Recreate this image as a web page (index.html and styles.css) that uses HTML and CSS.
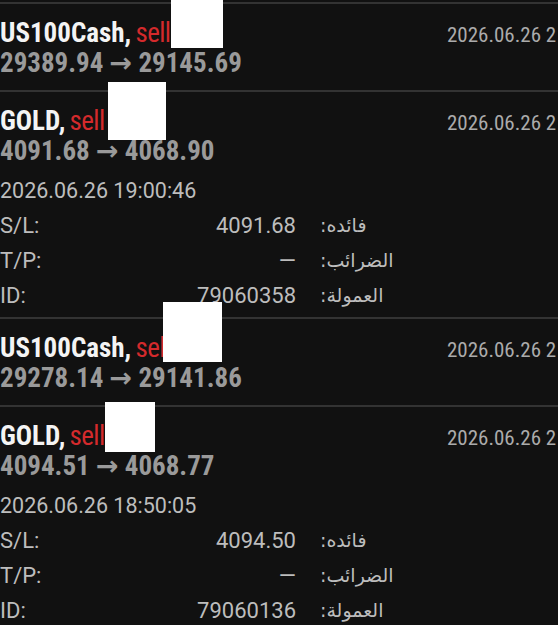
FILE: index.html
```html
<!DOCTYPE html>
<html lang="ar">
<head>
<meta charset="utf-8">
<title>History</title>
<link rel="stylesheet" href="styles.css">
</head>
<body>
<div class="page" dir="ltr">
  <div class="list">
    <div class="trade">
      <div class="head">
        <div class="main">
          <div class="title"><span class="sym">US100Cash,</span> <span class="side">sell</span></div>
          <div class="price">29389.94 → 29145.69</div>
        </div>
        <div class="time">2026.06.26 2</div>
      </div>
    </div>
    <div class="trade">
      <div class="head">
        <div class="main">
          <div class="title"><span class="sym">GOLD,</span> <span class="side">sell</span></div>
          <div class="price">4091.68 → 4068.90</div>
        </div>
        <div class="time">2026.06.26 2</div>
      </div>
      <div class="details">
        <div class="opened">2026.06.26 19:00:46</div>
        <div class="row"><span class="k">S/L:</span><span class="v">4091.68</span><span class="k2" dir="rtl">فائده:</span></div>
        <div class="row"><span class="k">T/P:</span><span class="v">—</span><span class="k2" dir="rtl">الضرائب:</span></div>
        <div class="row"><span class="k">ID:</span><span class="v">79060358</span><span class="k2" dir="rtl">العمولة:</span></div>
      </div>
    </div>
    <div class="trade">
      <div class="head">
        <div class="main">
          <div class="title"><span class="sym">US100Cash,</span> <span class="side">sell</span></div>
          <div class="price">29278.14 → 29141.86</div>
        </div>
        <div class="time">2026.06.26 2</div>
      </div>
    </div>
    <div class="trade">
      <div class="head">
        <div class="main">
          <div class="title"><span class="sym">GOLD,</span> <span class="side">sell</span></div>
          <div class="price">4094.51 → 4068.77</div>
        </div>
        <div class="time">2026.06.26 2</div>
      </div>
      <div class="details">
        <div class="opened">2026.06.26 18:50:05</div>
        <div class="row"><span class="k">S/L:</span><span class="v">4094.50</span><span class="k2" dir="rtl">فائده:</span></div>
        <div class="row"><span class="k">T/P:</span><span class="v">—</span><span class="k2" dir="rtl">الضرائب:</span></div>
        <div class="row"><span class="k">ID:</span><span class="v">79060136</span><span class="k2" dir="rtl">العمولة:</span></div>
      </div>
    </div>
  </div>
  <div class="redact r1"></div>
  <div class="redact r2"></div>
  <div class="redact r3"></div>
  <div class="redact r4"></div>
</div>
</body>
</html>
```

FILE: styles.css
```css
html, body {
  margin: 0;
  padding: 0;
  background: #111111;
}
body {
  width: 558px;
  height: 625px;
  overflow: hidden;
  font-family: "Roboto Condensed", Roboto, "DejaVu Sans", sans-serif;
}
.page {
  position: relative;
  width: 558px;
  height: 625px;
  overflow: hidden;
}
.list {
  padding-top: 2px;
}
.trade {
  border-top: 2px solid #333333;
  padding: 14px 0 12px;
}
.trade:has(.details) {
  padding-bottom: 4px;
}
.head {
  display: grid;
  grid-template-columns: 447px 1fr;
}
.title {
  font-size: 27px;
  line-height: 30px;
  font-weight: 700;
  color: #f4f4f4;
  white-space: nowrap;
  word-spacing: -2px;
}
.side {
  color: #d42a2c;
  font-weight: 400;
  letter-spacing: -0.6px;
}
.price {
  font-size: 27px;
  line-height: 30px;
  font-weight: 700;
  color: #9a9a9a;
  white-space: nowrap;
}
.time {
  font-size: 21px;
  line-height: 30px;
  padding-top: 2px;
  color: #ababab;
  white-space: nowrap;
}
.details {
  padding-top: 7px;
  color: #bdbdbd;
  font-family: Roboto, "DejaVu Sans", sans-serif;
}
.opened {
  font-size: 21.5px;
  line-height: 35px;
  white-space: nowrap;
}
.row {
  display: grid;
  grid-template-columns: 80px 216px 1fr;
  font-size: 22px;
  line-height: 35px;
}
.v {
  justify-self: end;
}
.k2 {
  display: block;
  text-align: left;
  margin-left: 24px;
  font-family: "DejaVu Sans", sans-serif;
  font-size: 19px;
}
.redact {
  position: absolute;
  background: #ffffff;
}
.r1 { left: 171px; top: 0; width: 52px; height: 48px; }
.r2 { left: 108px; top: 82px; width: 58px; height: 58px; }
.r3 { left: 163px; top: 302px; width: 59px; height: 60px; }
.r4 { left: 105px; top: 402px; width: 50px; height: 50px; }
```
